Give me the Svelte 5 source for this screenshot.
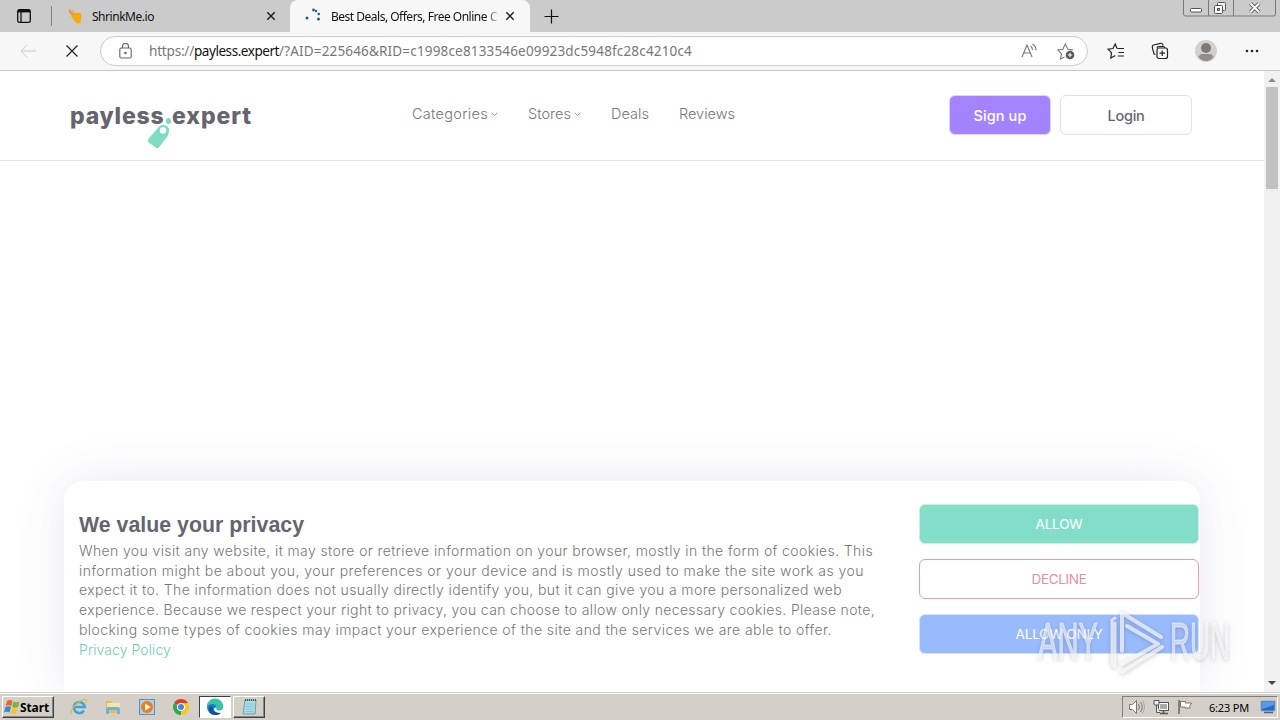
<script lang="ts">
  interface NavItem {
    label: string;
    width: number;
    menu?: boolean;
  }

  const navItems: NavItem[] = [
    { label: 'Categories', width: 76, menu: true },
    { label: 'Stores', width: 43, menu: true },
    { label: 'Deals', width: 38 },
    { label: 'Reviews', width: 56 },
  ];

  const privacyLines = [
    { text: 'When you visit any website, it may store or retrieve information on your browser, mostly in the form of cookies. This', width: 794 },
    { text: 'information might be about you, your preferences or your device and is mostly used to make the site work as you', width: 785 },
    { text: 'expect it to. The information does not usually directly identify you, but it can give you a more personalized web', width: 763 },
    { text: 'experience. Because we respect your right to privacy, you can choose to allow only necessary cookies. Please note,', width: 796 },
    { text: 'blocking some types of cookies may impact your experience of the site and the services we are able to offer.', width: 753 },
  ];

  const choices = [
    { label: 'ALLOW', kind: 'allow', width: 47 },
    { label: 'DECLINE', kind: 'decline', width: 55 },
    { label: 'ALLOW ONLY', kind: 'only', width: 87 },
  ];

  // Spreads the letters of a line so that it takes the given width
  function fit(node: HTMLElement, width: number) {
    const count = (node.textContent ?? '').length;
    const natural = node.getBoundingClientRect().width;
    node.style.letterSpacing = `${(width - natural) / count}px`;
  }
</script>

<div class="desktop">
  <div class="tabstrip">
    <svg class="tab-actions" width="16" height="16" viewBox="0 0 16 16" fill="none" stroke="#111">
      <rect x="1.7" y="1.7" width="12.6" height="12.6" rx="1.6" stroke-width="1.3" />
      <path d="M2 3.2h12" stroke-width="2.4" />
      <path d="M5 4v10" stroke-width="1.3" />
    </svg>
    <div class="tab tab-idle">
      <svg width="16" height="16" viewBox="0 0 16 16">
        <path d="M1 1l5 1 2 3-3 3-3-3z" fill="#e0b06a" />
        <path d="M4 8l4-3 5-.5 1.5 3.5-1 7-4 .5z" fill="#f5ab0c" />
        <path d="M2 3l5 4" stroke="#c98635" />
      </svg>
      <span class="tab-title"><span use:fit={62}>ShrinkMe.io</span></span>
      <svg class="close" width="10" height="10" viewBox="0 0 10 10"><path d="M1.3 1.3l7.4 7.4M8.7 1.3L1.3 8.7" stroke="#222" stroke-width="1.5" /></svg>
    </div>
    <div class="tab tab-active">
      <svg width="16" height="16" viewBox="0 0 16 16" fill="#17609b">
        <circle cx="2" cy="10" r="1.5" /><circle cx="8.5" cy="2" r="1.4" /><circle cx="11" cy="3" r="1.2" />
        <circle cx="13.8" cy="6" r="1.3" /><circle cx="13.5" cy="11" r="1.5" />
      </svg>
      <span class="tab-title clipped"><span use:fit={156}>Best Deals, Offers, Free Online</span> C</span>
      <svg class="close" width="10" height="10" viewBox="0 0 10 10"><path d="M1.3 1.3l7.4 7.4M8.7 1.3L1.3 8.7" stroke="#222" stroke-width="1.5" /></svg>
    </div>
    <svg class="new-tab" width="15" height="15" viewBox="0 0 15 15"><path d="M7.5 .5v14M.5 7.5h14" stroke="#111" stroke-width="1.2" /></svg>
    <svg class="window-controls" width="93" height="17" viewBox="0 0 93 17" fill="none">
      <path d="M.5 0v14q0 2 2 2h88q2 0 2-2V0M25.5 0v16M50.5 0v16" stroke="#777" />
      <rect x="7.5" y="8.5" width="11" height="3.5" rx="1" fill="#fff" stroke="#555" />
      <rect x="34.5" y="2.5" width="8" height="8" rx="1" fill="#eee" stroke="#555" />
      <rect x="31.5" y="5.5" width="8" height="8" rx="1" fill="#fff" stroke="#555" />
      <rect x="34.5" y="8.5" width="2" height="2" fill="#ccc" stroke="#555" />
      <path d="M67.5 3.5l8.5 8.5M76 3.5L67.5 12" stroke="#555" stroke-width="3.8" />
      <path d="M67.5 3.5l8.5 8.5M76 3.5L67.5 12" stroke="#fff" stroke-width="1.9" />
    </svg>
  </div>

  <div class="toolbar">
    <svg class="back" width="16" height="14" viewBox="0 0 16 14" fill="none" stroke="#c9c9c9"><path d="M7 .8L.9 7 7 13.2M1 7h15" /></svg>
    <svg class="stop" width="12" height="12" viewBox="0 0 12 12"><path d="M.5 .5l11 11M11.5 .5l-11 11" stroke="#222" stroke-width="1.2" /></svg>
    <div class="address">
      <svg class="lock" width="13" height="16" viewBox="0 0 13 16" fill="none" stroke="#666" stroke-width="1.1">
        <rect x=".8" y="5" width="11.4" height="10" rx="1.5" />
        <path d="M3.5 5V3.5a3 3 0 0 1 6 0V5" />
        <circle cx="6.5" cy="10" r=".7" fill="#555" />
      </svg>
      <span class="url"><span use:fit={45}>https://</span><b use:fit={85}>payless.expert</b><span use:fit={413}>/?AID=225646&RID=c1998ce8133546e09923dc5948fc28c4210c4</span></span>
      <svg class="read-aloud" width="17" height="16" viewBox="0 0 17 16" fill="none" stroke="#777" stroke-width="1.1">
        <path d="M1 14L6 2l5 12M2.8 10h6.5M9.5 3q2 1.5 2 4M11.5 1q3.5 2 3.5 6.5" />
      </svg>
      <svg class="favorite" width="18" height="18" viewBox="0 0 18 18" fill="none" stroke="#777" stroke-width="1.1">
        <path d="M7.5 15L3.5 17l1-5L1 8l4.8-.7L8.3 2l2.5 5.2 5 .7" />
        <circle cx="13" cy="13" r="4.3" fill="#555" stroke="none" />
        <path d="M10.8 13h4.4M13 10.8v4.4" stroke="#fff" />
      </svg>
    </div>
    <svg class="tool" width="18" height="16" viewBox="0 0 18 16" fill="none" stroke="#222" stroke-width="1.2">
      <path d="M10.5 5.5H17M11.5 9.5H17M11 13h6M10 5.5L8.2 1 6 5.5l-5 .7 3.5 3.5L3.8 15l4.5-2.5" />
    </svg>
    <svg class="tool" width="18" height="18" viewBox="0 0 18 18" fill="none" stroke="#222" stroke-width="1.2">
      <path d="M4.5 12.5L3 12 1.3 5.3Q1 3.5 2.5 3l7-1.7q1.8-.3 2.3 1.4l.3 1M6 6l1-1.5h5q1.5 0 2 1.5" />
      <rect x="6" y="6" width="10.5" height="10.5" rx="2" /><path d="M8.5 11.2h5.5M11.2 8.5V14" />
    </svg>
    <svg class="avatar" width="22" height="22" viewBox="0 0 22 22">
      <circle cx="11" cy="11" r="11" fill="#d2d0ce" /><circle cx="11" cy="8" r="5" fill="#7f7b78" />
      <path d="M3.5 17q1-3 4-3h7q3 0 4 3-3 4-7.5 4t-7.5-4z" fill="#918d8a" />
    </svg>
    <svg class="more" width="14" height="4" viewBox="0 0 14 4" fill="#222"><circle cx="2" cy="2" r="1.3" /><circle cx="7" cy="2" r="1.3" /><circle cx="12" cy="2" r="1.3" /></svg>
  </div>

  <div class="viewport">
    <div class="page">
      <header class="site-header">
        <div class="logo">
          <span class="logo-text"><span use:fit={94.5}>payless</span><i></i><span use:fit={80}>expert</span></span>
          <svg class="tag" width="24" height="25" viewBox="0 0 24 25">
            <path d="M12.5 2.3Q16 0 20 2.2q2.5 1.6 2 5.3-.3 3-2 5.5L12 23q-1.5 2-3.5.6l-6.7-5Q0 17 1.3 15z" fill="#7edcc3" />
            <circle cx="16" cy="6.5" r="3.2" fill="#fff" />
          </svg>
        </div>
        <nav>
          {#each navItems as item (item.label)}
            <a href="#top" onclick={(e) => e.preventDefault()}>
              <span use:fit={item.width}>{item.label}</span>
              {#if item.menu}
                <svg width="7" height="5" viewBox="0 0 7 5" fill="none" stroke="#999"><path d="M.6 .8l2.9 2.7L6.4 .8" /></svg>
              {/if}
            </a>
          {/each}
        </nav>
        <div class="account">
          <button class="signup"><span use:fit={53}>Sign up</span></button>
          <button class="login"><span use:fit={37}>Login</span></button>
        </div>
      </header>
      <main></main>
      <section class="cookie-card">
        <div class="cookie-copy">
          <h2><span use:fit={225}>We value your privacy</span></h2>
          {#each privacyLines as line}
            <p><span use:fit={line.width}>{line.text}</span></p>
          {/each}
          <p class="policy"><span use:fit={92}>Privacy Policy</span></p>
        </div>
        <div class="cookie-buttons">
          {#each choices as choice (choice.kind)}
            <button class={choice.kind}><span use:fit={choice.width}>{choice.label}</span></button>
          {/each}
        </div>
      </section>
    </div>
    <div class="scrollbar">
      <svg width="8" height="4" viewBox="0 0 8 4"><path d="M0 4l4-4 4 4z" fill="#8b8b8b" /></svg>
      <div class="thumb"></div>
      <svg class="down" width="8" height="4" viewBox="0 0 8 4"><path d="M0 0l4 4 4-4z" fill="#444" /></svg>
    </div>
  </div>

  <div class="taskbar">
    <div class="start">
      <svg width="16" height="16" viewBox="0 0 16 16">
        <path d="M3 2q3-2 5.5 0L7.2 7q-3-1.5-5.500 0z" fill="#e8642c" /><path d="M9.5 2.6q3 1.5 6 0L14 8q-3 1.5-5.800 0z" fill="#79b33c" />
        <path d="M1.5 8q3-1.5 5.5 0L5.5 13.500q-3-1.5-5.500 0z" fill="#3b86cf" /><path d="M8 9q3 1.5 5.800 0l-1.500 5.500q-3 1.500-5.800 0z" fill="#f5c534" />
      </svg>
      <span use:fit={29}>Start</span>
    </div>
    <div class="launchers">
      <svg width="18" height="18" viewBox="0 0 18 18" fill="none">
        <path d="M14 12.5a5.5 5.5 0 1 1 .8-3.500H5" stroke="#3fa5df" stroke-width="2.6" />
        <path d="M2 16Q-1 15 4 8.5 11 1 15.5 1.5 17.5 2 15.5 5" stroke="#e5b93c" stroke-width="1.2" />
      </svg>
      <svg width="18" height="18" viewBox="0 0 18 18">
        <path d="M2 3h5l1 2h7v10H2z" fill="#e3bd59" /><path d="M3 5h13v6H3z" fill="#f9e6a0" />
        <path d="M2 16v-5q0-2 2-2h10q2 0 2 2v5h-3v-4H5v4z" fill="#6db3dc" />
      </svg>
      <svg width="18" height="18" viewBox="0 0 18 18">
        <rect x="1.5" y="1.5" width="15" height="15" fill="#a9d2ef" stroke="#5d91b9" /><circle cx="9" cy="9" r="6" fill="#ef7d17" />
        <path d="M7 5.5L12.5 9 7 12.5z" fill="#fff" />
      </svg>
      <svg width="18" height="18" viewBox="0 0 18 18">
        <path d="M9 9L2.07 5a8 8 0 0 1 13.86 0z" fill="#e33b2e" /><path d="M9 9L2.07 5A8 8 0 0 0 9 17z" fill="#2da94f" />
        <path d="M9 9V17a8 8 0 0 0 6.93-12H9z" fill="#fdc90f" /><circle cx="9" cy="9" r="4" fill="#fff" /><circle cx="9" cy="9" r="3" fill="#4285e8" />
      </svg>
    </div>
    <div class="task pressed">
      <svg width="18" height="18" viewBox="0 0 18 18">
        <circle cx="9" cy="9" r="8" fill="#1979c9" /><path d="M1 9a8 8 0 0 1 16-1q0 4-4 4-3.5 0-2.5-2.5Q10 6 6.5 6 2.5 6 1 9z" fill="#35c5a4" />
        <path d="M6.5 9q-1 5 5 6 3 .2 4.5-1.5-2.5 4-7 3.5-5-.5-6-5 0-4 3.5-3z" fill="#124fa0" /><path d="M10.5 9.5q-.8 3 2.5 3 2.5 0 4-2v4l-3 .5q-6-.5-6-4 0-2 2.5-1.5z" fill="#fff" />
      </svg>
    </div>
    <div class="task raised">
      <svg width="17" height="18" viewBox="0 0 17 18">
        <path d="M4 2h11l-1 14H2z" fill="#a9dce5" stroke="#6b9fae" /><path d="M5 6h8M4.8 8.5h8M4.5 11h8M4.2 13.5h8" stroke="#8cc6d2" />
        <path d="M4 2h11" stroke="#555" stroke-width="2" stroke-dasharray="1 1" />
      </svg>
    </div>
    <div class="tray">
      <svg width="18" height="16" viewBox="0 0 18 16" fill="none" stroke="#777">
        <path d="M1.5 5.5h3l4-4v13l-4-4h-3z" fill="#fff" /><path d="M10.5 5q2 3 0 6M12.5 3q3.5 5 0 10" /><path d="M14.5 1.5q4 6.5 0 13" stroke="#aaa" />
      </svg>
      <svg width="17" height="16" viewBox="0 0 17 16" fill="none" stroke="#555">
        <rect x="5.5" y="3.5" width="10" height="8" fill="#aaa" /><rect x="6.5" y="4.500" width="8" height="6" stroke="#fff" /><path d="M7 14.5h8M10.5 12v2" stroke-width="1.5" />
        <path d="M1 1.500h5V5q0 1-1 1H2Q1 6 1 5zM3.5 6v7.5H7" fill="#eee" />
      </svg>
      <svg width="17" height="16" viewBox="0 0 17 16" stroke="#777" fill="#fff">
        <path d="M2 1v14" stroke-width="1.8" /><path d="M3.5 2.5h5v1.5h6l-2 3.5 1 1.5H8V8H3.5z" />
      </svg>
      <span class="clock"><span use:fit={40}>6:23 PM</span></span>
      <svg class="desk" width="16" height="14" viewBox="0 0 16 14"><path d="M1 1h14v10H1z" fill="#2768c4" stroke="#8aa9cf" /><path d="M2 2h12v3L2 9z" fill="#5c9be4" /><path d="M4 12.5h9" stroke="#47638a" stroke-width="1.5" /></svg>
    </div>
  </div>

  <svg class="watermark" width="206" height="72" viewBox="0 0 206 72">
    <g fill="#fff" fill-opacity=".55" stroke="#fff" stroke-opacity=".5" stroke-width="1.2">
      <text x="8" y="54" textLength="60" lengthAdjust="spacingAndGlyphs">ANY</text>
      <text x="140" y="54" textLength="60" lengthAdjust="spacingAndGlyphs">RUN</text>
    </g>
    <g fill="none" stroke="#fff" stroke-opacity=".68" stroke-width="4" stroke-linejoin="round" stroke-linecap="round">
      <path d="M85 13l-3 2v44l3 3V18" stroke-width="3" />
      <path d="M92 46V8l39 24" />
      <path d="M97 21l31 18-36 20" />
      <path d="M92 67l40-25" />
    </g>
  </svg>
</div>

<style>
  :global(body) {
    overflow: hidden;
  }
  .desktop {
    width: 1280px;
    height: 720px;
    position: relative;
    display: flex;
    flex-direction: column;
    overflow: hidden;
    background: #fff;
    font-family: 'Noto Sans', sans-serif;
  }
  svg {
    display: block;
    flex: none;
  }
  span, b {
    white-space: nowrap;
  }
  button, a {
    font: inherit;
    color: inherit;
    text-decoration: none;
  }

  .tabstrip {
    height: 32px;
    flex: none;
    display: flex;
    align-items: center;
    background: #cbcbcb;
    font-size: 12px;
    color: #111;
  }
  .tab-actions {
    margin-left: 16px;
  }
  .tab {
    display: flex;
    align-items: center;
    box-sizing: border-box;
  }
  .tab-idle {
    width: 239px;
    height: 20px;
    margin-left: 19px;
    padding: 0 14px 0 15px;
    border-left: 1px solid #858585;
  }
  .tab-active {
    width: 240px;
    height: 32px;
    padding: 0 15px 0 15px;
    background: #f7f7f7;
    border-radius: 8px 8px 0 0;
  }
  .tab-title {
    flex: 1;
    margin-left: 9px;
    overflow: hidden;
  }
  .tab-active .tab-title {
    margin: 0 8px 0 10px;
  }
  .clipped {
    mask-image: linear-gradient(90deg, #000 155px, transparent 169px);
  }
  .new-tab {
    margin-left: 14px;
  }
  .window-controls {
    align-self: flex-start;
    margin-left: auto;
    margin-right: 4px;
  }

  .toolbar {
    height: 39px;
    box-sizing: border-box;
    flex: none;
    display: flex;
    align-items: center;
    background: #f7f7f7;
    border-bottom: 1px solid #c6c6c6;
  }
  .back {
    margin-left: 20px;
  }
  .stop {
    margin: 0 28px 0 30px;
  }
  .address {
    width: 988px;
    height: 30px;
    margin-left: -6px;
    margin-right: 19px;
    box-sizing: border-box;
    display: flex;
    align-items: center;
    padding: 0 12px 0 18px;
    background: #fff;
    border: 1px solid #ccc;
    border-radius: 15px;
  }
  .url {
    flex: 1;
    margin-left: 17px;
    font-size: 13.5px;
    color: #777;
  }
  .url b {
    color: #111;
    font-weight: 400;
  }
  .favorite {
    margin-left: 19px;
  }
  .tool + .tool {
    margin-left: 26px;
  }
  .avatar {
    margin-left: 26px;
  }
  .more {
    margin-left: 28px;
  }

  .viewport {
    flex: 1;
    min-height: 0;
    display: flex;
  }
  .page {
    width: 1264px;
    display: flex;
    flex-direction: column;
    overflow: hidden;
    font-family: Inter, sans-serif;
  }
  .site-header {
    height: 90px;
    box-sizing: border-box;
    display: flex;
    border-bottom: 1px solid #e3e3e3;
  }
  .logo {
    width: 182px;
    margin: 29px 0 0 70px;
    font: 800 23px/32px Inter, sans-serif;
    color: #65656f;
  }
  .logo-text {
    display: flex;
    align-items: baseline;
  }
  .logo i {
    width: 6px;
    height: 6px;
    margin: 0 1px;
    border-radius: 50%;
    background: #7fd8c0;
  }
  .tag {
    margin: -8px 0 0 77px;
  }
  nav {
    display: flex;
    gap: 30px;
    margin: 33px 0 0 160px;
    font-size: 14.5px;
    line-height: 20px;
    font-weight: 300;
    color: #777;
  }
  nav a {
    display: flex;
    height: 20px;
    align-items: center;
    gap: 3px;
  }
  .account {
    display: flex;
    gap: 9px;
    margin: 24px 72px 0 auto;
    font-size: 14.5px;
    font-weight: 500;
  }
  .account button, .cookie-buttons button {
    height: 40px;
    box-sizing: border-box;
    padding: 0;
    border-radius: 6px;
  }
  .signup {
    width: 102px;
    border: 1px solid #ddd6fb;
    background: #a383ff;
    color: #fff;
  }
  .login {
    width: 132px;
    border: 1px solid #e2e2e4;
    background: #fff;
    color: #66666c;
  }
  main {
    flex: 1;
  }
  .cookie-card {
    height: 211px;
    box-sizing: border-box;
    margin: 0 64px;
    padding: 23px 1px 0 15px;
    display: flex;
    justify-content: space-between;
    background: #fff;
    border-radius: 20px 20px 0 0;
    box-shadow: 0 0 50px rgba(70, 60, 150, 0.12);
  }
  .cookie-copy {
    padding-top: 7px;
    font-size: 14px;
    font-weight: 300;
    color: #777;
  }
  .cookie-copy h2 {
    margin: 0 0 2px;
    font: 700 21.3px/28px 'Liberation Sans', sans-serif;
    color: #656570;
  }
  .cookie-copy p {
    margin: 0;
    line-height: 19.7px;
  }
  .cookie-copy .policy {
    color: #6fcdb3;
  }
  .cookie-buttons {
    width: 280px;
    display: flex;
    flex-direction: column;
    gap: 15px;
    font-size: 13.5px;
  }
  .allow {
    background: #83dec9;
    border: 1px solid #cceee5;
    color: #fff;
  }
  .decline {
    background: #fff;
    border: 1px solid #e3a0aa;
    color: #de949e;
  }
  .only {
    background: #99bbfd;
    border: 1px solid #d5e2fb;
    color: #fff;
  }
  .scrollbar {
    width: 16px;
    display: flex;
    flex-direction: column;
    align-items: center;
    padding-top: 7px;
    box-sizing: border-box;
    background: #f1f1f1;
  }
  .thumb {
    width: 12px;
    height: 102px;
    margin-top: 5px;
    background: #c1c1c1;
  }
  .down {
    margin: auto 0 7px;
  }

  .taskbar {
    height: 28px;
    flex: none;
    box-sizing: border-box;
    display: flex;
    align-items: flex-start;
    padding: 3px 2px 0;
    border-top: 1px solid #d4d0c8;
    box-shadow: inset 0 1px #fff;
    background: #d4d0c8;
  }
  .start, .task {
    height: 22px;
    box-sizing: border-box;
    display: flex;
    align-items: center;
    border: 1px solid;
    border-color: #fff #404040 #404040 #fff;
    box-shadow: inset -1px -1px #888;
  }
  .start {
    width: 52px;
    padding-left: 1px;
    font: 700 12px 'Noto Sans', sans-serif;
    color: #000;
  }
  .launchers {
    height: 22px;
    margin: 0 9px 0 16px;
    display: flex;
    align-items: center;
    gap: 16px;
  }
  .task {
    width: 32px;
    justify-content: center;
  }
  .pressed {
    background: #fff;
    border-color: #404040 #fff #fff #404040;
    box-shadow: none;
  }
  .raised {
    margin-left: 2px;
  }
  .tray {
    width: 156px;
    height: 22px;
    box-sizing: border-box;
    margin-left: auto;
    padding-left: 5px;
    display: flex;
    align-items: center;
    gap: 7px;
    border: 1px solid;
    border-color: #808080 #fff #fff #808080;
  }
  .clock {
    margin-left: 8px;
    font-size: 11px;
    color: #000;
  }
  .desk {
    margin-left: 4px;
  }
  .watermark {
    position: absolute;
    left: 1030px;
    top: 605px;
    filter: drop-shadow(0 1px 2px rgba(60, 60, 70, 0.4));
  }
  .watermark text {
    font: 400 51px 'Liberation Sans Narrow', 'Liberation Sans', sans-serif;
  }
</style>
